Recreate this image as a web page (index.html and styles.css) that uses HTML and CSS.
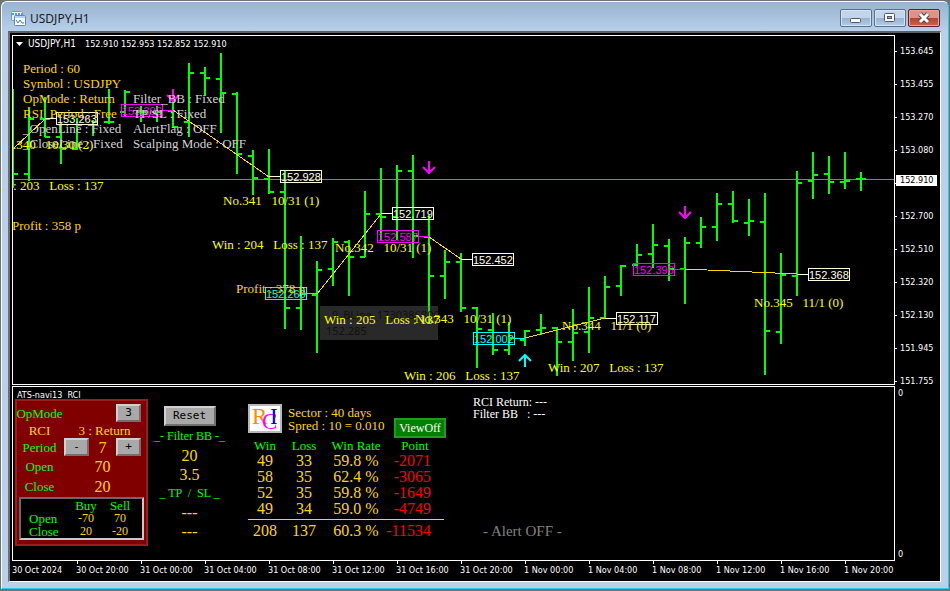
FILE: index.html
```html
<!DOCTYPE html>
<html lang="en">

<head>
    <meta charset="UTF-8">
    <meta name="viewport" content="width=device-width, initial-scale=1.0">
    <title>USDJPY,H1</title>
    <link rel="stylesheet" href="styles.css">
</head>

<body>
    <div class="window">
        <header class="titlebar">
            <svg class="titleIcon" width="15" height="15" viewBox="0 0 15 15">
                <rect x="0.5" y="0.5" width="11" height="9" rx="1" fill="#eaf3ff" stroke="#5a9ae8" />
                <path d="M1 3h10" stroke="#5a9ae8" stroke-width="2" stroke-dasharray="2 1" />
                <rect x="3.5" y="4.5" width="11" height="10" rx="1" fill="#fff" stroke="#4a8ae0" />
                <path d="M4 6h10" stroke="#6aa6f0" />
                <path d="M5 9l2 3 2-3 2 3h2" fill="none" stroke="#3b7ad6" />
            </svg>
            <h1 class="titleText">USDJPY,H1</h1>
            <div class="windowButtons">
                <button class="winButton" aria-label="Minimize">
                    <svg width="12" height="12" viewBox="0 0 12 12"><rect x="0.5" y="6.5" width="10" height="4" rx="1" fill="#fff" stroke="#535666" /></svg>
                </button>
                <button class="winButton" aria-label="Maximize">
                    <svg width="12" height="12" viewBox="0 0 12 12"><rect x="0.5" y="1.5" width="10" height="8" rx="1" fill="#fff" stroke="#535666" /><rect x="3.5" y="4.5" width="4" height="2" fill="#8fa9c8" stroke="#535666" /></svg>
                </button>
                <button class="winButton closeButton" aria-label="Close">
                    <svg width="12" height="12" viewBox="0 0 12 12"><path d="M2 2l8 8M10 2l-8 8" stroke="#4b4450" stroke-width="5" /><path d="M2 2l8 8M10 2l-8 8" stroke="#fff" stroke-width="3" /></svg>
                </button>
            </div>
        </header>

        <main class="client">
            <!-- price chart -->
            <section class="pane">
                <svg class="chart" viewBox="13 36 881 348">
                    <path d="M13 179.500H894" stroke="#778094" />
                    <g id="bars" class="bars"></g>
                    <g class="trend">
                        <path d="M13 149L45 119M173 110L269 177M317 294L381 214M429 237L461 259M525 338L605 318M685 269L797 274" />
                    </g>
                    <g class="arrow sell">
                        <path d="M173 89v12M167 95l6 6 6-6" />
                        <path d="M429 161v12M423 167l6 6 6-6" />
                        <path d="M685 206v12M679 212l6 6 6-6" />
                    </g>
                    <g class="arrow buy">
                        <path d="M525 367v-12M519 361l6-6 6 6" />
                    </g>
                    <g class="hint">
                        <rect x="320" y="306" width="118" height="34" />
                        <text x="332" y="319">9_BLine_1730386800</text>
                        <text x="326" y="335">152.285</text>
                    </g>
                    <g id="labels"></g>
                    <g class="info gold">
                        <text x="23" y="73">Period : 60</text>
                        <text x="23" y="88">Symbol : USDJPY</text>
                        <text x="23" y="103">OpMode : Return</text>
                        <text x="23" y="118">RSI_Period : Free</text>
                        <text x="12" y="230">Profit : 358 p</text>
                        <text x="236" y="293">Profit : 378 p</text>
                    </g>
                    <g class="info silver">
                        <text x="23" y="133">_OpenLine : Fixed</text>
                        <text x="23" y="148">_CloseLine : Fixed</text>
                        <text x="133" y="103">Filter_BB : Fixed</text>
                        <text x="133" y="118">TP/SL : Fixed</text>
                        <text x="133" y="133">AlertFlag : OFF</text>
                        <text x="133" y="148">Scalping Mode : OFF</text>
                    </g>
                    <g class="info yellow">
                        <text x="-3" y="149">No.340   10/30 (2)</text>
                        <text x="223" y="205">No.341   10/31 (1)</text>
                        <text x="335" y="252">No.342   10/31 (1)</text>
                        <text x="415" y="323">No.343   10/31 (1)</text>
                        <text x="562" y="330">No.344   11/1 (0)</text>
                        <text x="754" y="307">No.345   11/1 (0)</text>
                        <text x="-12" y="190">Win : 203   Loss : 137</text>
                        <text x="212" y="249">Win : 204   Loss : 137</text>
                        <text x="324" y="324">Win : 205   Loss : 137</text>
                        <text x="404" y="380">Win : 206   Loss : 137</text>
                        <text x="548" y="372">Win : 207   Loss : 137</text>
                    </g>
                    <path d="M16 42h7l-3.500 4z" fill="#fff" />
                    <text class="quote symbol" x="28" y="47">USDJPY,H1</text>
                    <text class="quote" x="85" y="47">152.910 152.953 152.852 152.910</text>
                </svg>
            </section>
            <aside class="priceAxis">
                <ul class="prices">
                    <li>153.645</li>
                    <li>153.455</li>
                    <li>153.270</li>
                    <li>153.080</li>
                    <li>152.890</li>
                    <li>152.700</li>
                    <li>152.510</li>
                    <li>152.320</li>
                    <li>152.130</li>
                    <li>151.945</li>
                    <li>151.755</li>
                </ul>
                <span class="currentPrice">152.910</span>
            </aside>

            <!-- indicator window -->
            <section class="pane indicator">
                <div class="modeColumn">
                    <div class="indicatorName">ATS-navi13  RCI</div>
                    <div class="modePanel">
                        <div class="modeRow">
                            <span>OpMode</span>
                            <button class="gray modeButton">3</button>
                        </div>
                        <div class="modeRow nameRow">
                            <span>RCI</span>
                            <span class="modeName">3 : Return</span>
                        </div>
                        <div class="modeRow">
                            <span>Period</span>
                            <button class="gray">-</button>
                            <span class="value">7</span>
                            <button class="gray">+</button>
                        </div>
                        <div class="modeRow levelRow">
                            <span>Open</span>
                            <span class="value level">70</span>
                        </div>
                        <div class="modeRow levelRow">
                            <span>Close</span>
                            <span class="value level">20</span>
                        </div>
                        <table class="levels">
                            <tr><td></td><th>Buy</th><th>Sell</th></tr>
                            <tr><th>Open</th><td>-70</td><td>70</td></tr>
                            <tr><th>Close</th><td>20</td><td>-20</td></tr>
                        </table>
                    </div>
                </div>

                <div class="filterColumn">
                    <button class="gray resetButton">Reset</button>
                    <span class="caption">_- Filter BB -_</span>
                    <span>20</span>
                    <span>3.5</span>
                    <span class="caption">_ TP  /  SL _</span>
                    <span>---</span>
                    <span>---</span>
                </div>

                <div class="statsColumn">
                    <div class="statsHead">
                        <svg class="logo" width="34" height="29" viewBox="0 0 34 29">
                            <rect x="1" y="1" width="32" height="27" fill="#fff" stroke="#b8b8b8" stroke-width="2" />
                            <text x="4" y="20" fill="#ff8c00">R</text>
                            <text x="14" y="25" fill="#ff00ff">C</text>
                            <text x="22" y="20" fill="#0000e0">I</text>
                        </svg>
                        <div class="sector">Sector : 40 days<br>Spred : 10 = 0.010</div>
                        <button class="viewButton">ViewOff</button>
                    </div>
                    <table class="stats">
                        <thead>
                            <tr><th>Win</th><th>Loss</th><th>Win Rate</th><th>Point</th></tr>
                        </thead>
                        <tbody>
                            <tr><td>49</td><td>33</td><td>59.8 %</td><td>-2071</td></tr>
                            <tr><td>58</td><td>35</td><td>62.4 %</td><td>-3065</td></tr>
                            <tr><td>52</td><td>35</td><td>59.8 %</td><td>-1649</td></tr>
                            <tr><td>49</td><td>34</td><td>59.0 %</td><td>-4749</td></tr>
                        </tbody>
                        <tfoot>
                            <tr><td>208</td><td>137</td><td>60.3 %</td><td>-11534</td></tr>
                        </tfoot>
                    </table>
                </div>

                <div class="alertColumn">
                    <div class="signal">RCI Return: ---<br>Filter BB   : ---</div>
                    <div class="alertOff">- Alert OFF -</div>
                </div>
            </section>
            <aside class="indicatorAxis">
                <span>0</span>
                <span>0</span>
            </aside>

            <ul class="timeAxis">
                <li>30 Oct 2024</li>
                <li>30 Oct 20:00</li>
                <li>31 Oct 00:00</li>
                <li>31 Oct 04:00</li>
                <li>31 Oct 08:00</li>
                <li>31 Oct 12:00</li>
                <li>31 Oct 16:00</li>
                <li>31 Oct 20:00</li>
                <li>1 Nov 00:00</li>
                <li>1 Nov 04:00</li>
                <li>1 Nov 08:00</li>
                <li>1 Nov 12:00</li>
                <li>1 Nov 16:00</li>
                <li>1 Nov 20:00</li>
            </ul>
        </main>
    </div>

    <script>
        // high, low, open, close
        const bars = [
            [89, 188, 174, 174], [107, 181, 174, 119], [97, 137, 119, 137], [123, 164, 137, 149],
            [118, 150, 149, 125], [120, 136, 125, 122], [89, 124, 122, 122], [90, 116, 112, 92],
            [106, 122, 112, 112], [106, 122, 112, 112], [100, 128, 111, 127], [63, 137, 122, 73],
            [67, 96, 73, 78], [53, 133, 79, 93], [92, 174, 94, 154], [150, 195, 156, 178],
            [149, 194, 179, 192], [171, 329, 192, 308], [236, 330, 308, 294], [261, 353, 295, 270],
            [238, 286, 269, 242], [240, 296, 242, 257], [191, 257, 257, 214], [168, 240, 214, 217],
            [165, 240, 217, 171], [155, 258, 171, 236], [215, 324, 237, 276], [250, 299, 276, 262],
            [253, 312, 262, 308], [307, 368, 308, 329], [313, 355, 330, 350], [322, 355, 350, 338],
            [330, 346, 340, 331], [314, 335, 330, 328], [327, 376, 328, 342], [309, 361, 342, 333],
            [287, 353, 332, 318], [276, 319, 318, 287], [265, 296, 286, 266], [244, 266, 265, 255],
            [224, 268, 254, 245], [239, 281, 246, 269], [237, 304, 269, 243], [217, 248, 243, 227],
            [193, 241, 227, 204], [191, 223, 204, 221], [199, 236, 223, 221], [193, 375, 222, 331],
            [253, 344, 332, 275], [171, 296, 276, 183], [152, 199, 181, 175], [156, 194, 174, 182],
            [152, 189, 182, 181], [172, 191, 179, 179]
        ];
        // price, box x, box y, anchor x, color
        const labels = [
            ['153.263', 56, 113, 45, '#ffffe0'], ['153.306', 121, 105, 173, '#ff00ff'],
            ['152.928', 280, 171, 269, '#ffffe0'], ['152.719', 392, 208, 381, '#ffffe0'],
            ['152.587', 377, 231, 429, '#ff00ff'], ['152.452', 472, 254, 461, '#ffffe0'],
            ['152.269', 265, 288, 317, '#00ffff'], ['152.002', 473, 333, 525, '#00ffff'],
            ['152.117', 616, 313, 605, '#ffffe0'], ['152.396', 633, 264, 685, '#ff00ff'],
            ['152.368', 808, 269, 797, '#ffffe0']
        ];

        let path = '';
        bars.forEach(function (bar, i) {
            const x = 13 + i * 16;
            path += `M${x} ${bar[0]}V${bar[1]}M${x - 5} ${bar[2]}H${x}M${x} ${bar[3]}H${x + 5}`;
        });
        document.querySelector('#bars').innerHTML = `<path d="${path}" />`;

        let boxes = '';
        labels.forEach(function ([price, x, y, anchor, color]) {
            const edge = anchor < x ? x : x + 42;
            boxes += `<g class="priceLabel" stroke="${color}" fill="${color}">
                <rect x="${x + 0.5}" y="${y - 0.5}" width="41" height="12" fill="none" />
                <path d="M${edge} ${y + 5.5}H${anchor}" />
                <text x="${x + 1}" y="${y + 10}" stroke="none">${price}</text></g>`;
        });
        document.querySelector('#labels').innerHTML = boxes;
    </script>
</body>

</html>
```
FILE: styles.css
```css
* {
    box-sizing: border-box;
}

body {
    margin: 0;
    background-color: #6e7478;
}

ul {
    margin: 0;
    padding: 0;
    list-style: none;
}

button {
    padding: 0;
    cursor: pointer;
}

/* window frame */
.window {
    margin-top: 1px;
    margin-left: 1px;
    margin-right: 1px;
    padding: 0 7px 6px 6px;
    border: 1px solid #2fcbe6;
    border-top-color: #fff;
    border-left-color: #fff;
    border-radius: 6px 6px 0 0;
    background: linear-gradient(#98b3d1, #b9d1ea 30px);
}

.titlebar {
    height: 29px;
    display: flex;
    align-items: center;
    padding: 3px 1px 0 3px;
}

.titleIcon {
    display: block;
    margin-right: 4px;
}

.titleText {
    margin: 0;
    font: 12px "Noto Sans", sans-serif;
    color: #1c1c24;
}

.windowButtons {
    margin-left: auto;
    display: flex;
    gap: 2px;
}

.winButton {
    width: 32px;
    height: 18px;
    display: flex;
    justify-content: center;
    align-items: center;
    border: 1px solid #56708f;
    border-radius: 2px;
    box-shadow: inset 0 0 0 1px #d5e3f2;
    background: linear-gradient(#c3d5e9 50%, #96b2d0 50%, #b4cce5);
}

.closeButton {
    border-color: #5c2028;
    box-shadow: inset 0 0 0 1px #e5a79c;
    background: linear-gradient(#dd9485 50%, #b9402b 50%, #cb6450);
}

/* client area */
.client {
    display: grid;
    grid-template-columns: 1fr 45px;
    row-gap: 1px;
    padding: 2px 0 0 2px;
    border: 1px solid #fff;
    border-width: 2px 1px 1px 2px;
    border-top-color: #5c6064;
    border-left-color: #6c7074;
    background-color: #000;
    color: #fff;
    font: 9px/11px "DejaVu Sans Condensed", "DejaVu Sans", sans-serif;
}

.pane {
    min-width: 0;
    border: 1px solid #fff;
}

.chart {
    display: block;
    width: 100%;
    height: auto;
}

.chart text {
    white-space: pre;
}

.bars {
    stroke: #00ff00;
    stroke-width: 2;
    shape-rendering: crispEdges;
}

.trend {
    stroke: #ffd700;
    shape-rendering: crispEdges;
}

.arrow {
    fill: none;
    stroke-width: 2;
}

.sell {
    stroke: #ff00ff;
}

.buy {
    stroke: #00ffff;
}

.hint {
    font: 11px "Noto Sans", sans-serif;
    fill: #111;
}

.hint rect {
    fill: #888;
    fill-opacity: 0.3;
}

.info {
    font: 13px "Liberation Serif", serif;
}

.gold {
    fill: #ffd700;
}

.silver {
    fill: #d3d3d3;
}

.yellow {
    fill: #ffff00;
}

.quote {
    fill: #fff;
}

.symbol {
    font-size: 10px;
}

.priceLabel {
    font: 11px "Liberation Sans", sans-serif;
}

/* axes */
.priceAxis {
    position: relative;
}

.prices {
    height: calc(100% + 13px);
    display: flex;
    flex-direction: column;
}

.prices li {
    flex: 1;
    display: flex;
    align-items: center;
    gap: 3px;
}

.prices li::before {
    content: "";
    width: 2px;
    height: 1px;
    background-color: #fff;
}

.currentPrice {
    position: absolute;
    left: 1px;
    top: 40%;
    width: 41px;
    padding-left: 4px;
    background-color: #fff;
    color: #000;
}

.indicatorAxis {
    display: flex;
    flex-direction: column;
    justify-content: space-between;
    padding: 2px 3px 1px;
}

.timeAxis {
    grid-column: 1 / 3;
    height: 19px;
    display: grid;
    grid-template-columns: repeat(14, minmax(0, 2fr)) minmax(0, 1fr);
    white-space: nowrap;
}

.timeAxis li {
    line-height: 17px;
}

.timeAxis li + li::before {
    content: "";
    display: block;
    width: 1px;
    height: 3px;
    margin: -1px 0 -2px 1px;
    background-color: #fff;
}

/* indicator window */
.indicator {
    display: flex;
    padding: 0 2px 14px;
    font-family: "Liberation Serif", serif;
    font-size: 13px;
    color: #ffd700;
}

.indicatorName {
    height: 12px;
    padding-left: 2px;
    font: 9px/17px "DejaVu Sans Condensed", "DejaVu Sans", sans-serif;
    color: #fff;
    white-space: pre;
}

.modePanel {
    position: relative;
    width: 133px;
    padding: 5px 0 6px;
    background-color: #800000;
    box-shadow: inset 0 0 0 2px #a01c1c;
}

.modeRow {
    display: grid;
    grid-template-columns: 49px 25px 27px 25px;
    height: 18px;
    margin-bottom: 1px;
    align-items: center;
    justify-items: center;
    color: #00ff00;
}

.nameRow {
    height: 14px;
}

.levelRow {
    height: 19px;
}

.nameRow span,
.modeRow .value {
    color: #ffd700;
}

.modeName {
    grid-column: 2 / 5;
    justify-self: center;
    padding-left: 4px;
}

.value {
    font-size: 16px;
}

.level {
    grid-column: 3;
}

.gray {
    width: 25px;
    height: 18px;
    border: 2px solid #d0d0d0;
    border-right-color: #707070;
    border-bottom-color: #707070;
    background-color: #a9a9a9;
    color: #000;
    font: 11px/14px "DejaVu Sans Mono", monospace;
}

.modeButton {
    grid-column: 4;
}

.levels {
    width: 125px;
    margin: 0 4px;
    border: 2px solid #c8c8c8;
    border-top-color: #696969;
    border-left-color: #696969;
    border-spacing: 0;
    table-layout: fixed;
    background-color: #000;
    line-height: 13px;
}

.levels th,
.levels td {
    width: 34px;
    padding: 0;
    text-align: center;
    font-weight: normal;
}

.levels th {
    color: #00ff00;
}

.levels td {
    font-size: 12px;
}

.levels tr > :first-child {
    width: 48px;
    padding-left: 8px;
    text-align: left;
}

.levels tr > :last-child {
    width: 39px;
    padding-right: 5px;
}

.filterColumn {
    width: 83px;
    padding-top: 19px;
    display: flex;
    flex-direction: column;
    align-items: center;
    font-size: 16px;
    line-height: 19px;
}

.resetButton {
    width: 52px;
    height: 20px;
    margin-bottom: 1px;
}

.caption {
    font-size: 12px;
    color: #00ff00;
    white-space: pre;
}

.statsColumn {
    width: 198px;
    margin-left: 17px;
    padding-top: 17px;
}

.statsHead {
    display: flex;
    align-items: flex-start;
    height: 34px;
}

.logo {
    font: 23px "Liberation Serif", serif;
}

.sector {
    width: 0;
    margin: 2px 0 0 6px;
    line-height: 13px;
    white-space: nowrap;
}

.viewButton {
    width: 52px;
    height: 20px;
    margin-left: auto;
    align-self: flex-end;
    border: 2px solid #209a20;
    background-color: #008000;
    color: #fff;
    font: 12px/14px "Liberation Serif", serif;
}

.stats {
    width: 196px;
    table-layout: fixed;
    border-collapse: collapse;
    font-size: 16px;
    line-height: 16px;
    white-space: nowrap;
}

.stats th,
.stats td {
    padding: 0;
    text-align: center;
}

.stats th {
    width: 34px;
    font-size: 13px;
    line-height: 15px;
    font-weight: normal;
    color: #00ff00;
}

.stats th:nth-child(2) {
    width: 44px;
}

.stats th:nth-child(3) {
    width: 60px;
}

.stats th:nth-child(4) {
    width: 58px;
}

.stats td:last-child {
    padding-right: 13px;
    text-align: right;
    color: #ff0000;
}

.stats tbody tr:last-child td {
    padding-bottom: 2px;
}

.stats tfoot td {
    padding-top: 3px;
    border-top: 1px solid #ffd700;
}

.alertColumn {
    margin-left: 27px;
    padding: 9px 0 6px;
    display: flex;
    flex-direction: column;
    justify-content: space-between;
}

.signal {
    font-size: 12px;
    line-height: 12px;
    color: #fff;
    white-space: pre;
}

.alertOff {
    padding-left: 10px;
    font-size: 15px;
    line-height: 18px;
    color: #808080;
}
```
